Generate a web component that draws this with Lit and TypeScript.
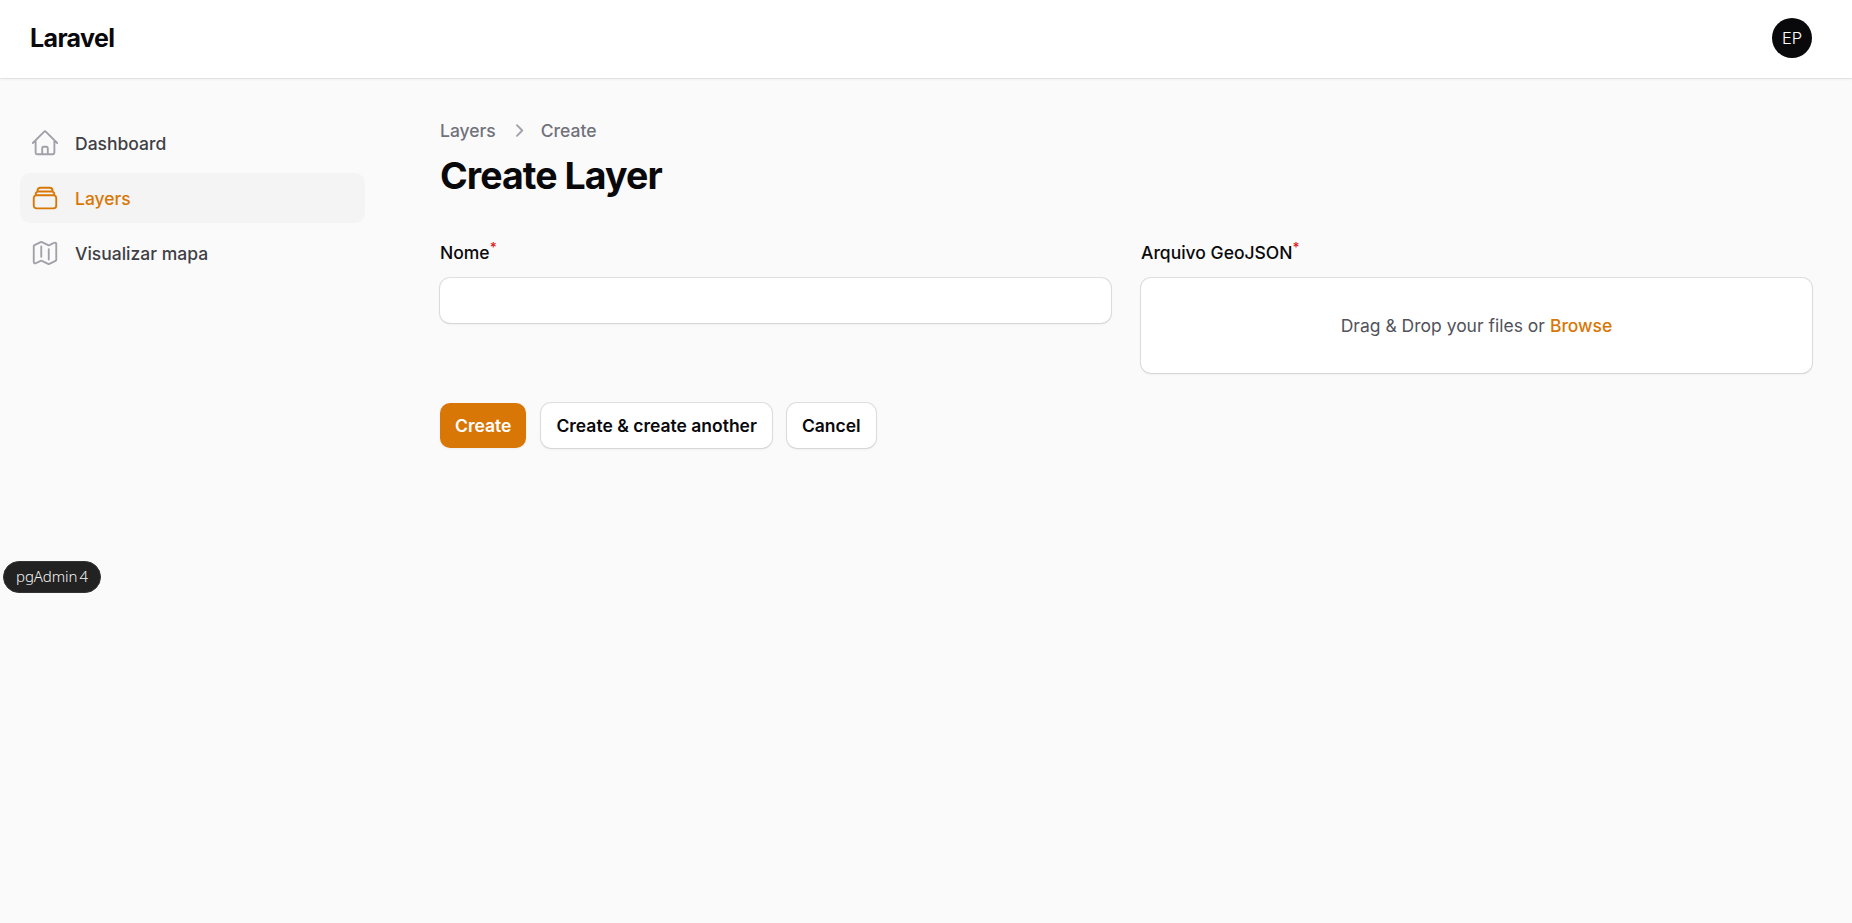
import { LitElement, html, css, svg } from "lit";
import { customElement } from "lit/decorators.js";

const icons = {
  home: "m2.25 12 8.954-8.955c.44-.439 1.152-.439 1.591 0L21.75 12M4.5 9.75v10.125c0 .621.504 1.125 1.125 1.125H9.75v-4.875c0-.621.504-1.125 1.125-1.125h2.25c.621 0 1.125.504 1.125 1.125V21h4.125c.621 0 1.125-.504 1.125-1.125V9.75M8.25 21h8.25",
  stack: "M6 6.878V6a2.25 2.25 0 0 1 2.25-2.25h7.5A2.25 2.25 0 0 1 18 6v.878m-12 0c.235-.083.487-.128.75-.128h10.5c.263 0 .515.045.75.128m-12 0A2.25 2.25 0 0 0 4.5 9v.878m13.5-3A2.25 2.25 0 0 1 19.5 9v.878m0 0a2.246 2.246 0 0 0-.75-.128H5.25c-.263 0-.515.045-.75.128m15 0A2.25 2.25 0 0 1 21 12v6a2.25 2.25 0 0 1-2.25 2.25H5.25A2.25 2.25 0 0 1 3 18v-6c0-.98.626-1.813 1.5-2.122",
  map: "M9 6.75V15m6-6v8.25m.503 3.498 4.875-2.437c.381-.19.622-.58.622-1.006V4.82c0-.836-.88-1.38-1.628-1.006l-3.869 1.934c-.317.159-.69.159-1.006 0L9.503 3.252a1.125 1.125 0 0 0-1.006 0L3.622 5.689C3.24 5.88 3 6.27 3 6.695V19.18c0 .836.88 1.38 1.628 1.006l3.869-1.934c.317-.159.69-.159 1.006 0l4.994 2.497c.317.158.69.158 1.006 0Z",
};

const nav = [
  { label: "Dashboard", icon: icons.home, active: false },
  { label: "Layers", icon: icons.stack, active: true },
  { label: "Visualizar mapa", icon: icons.map, active: false },
];

@customElement("app-root")
export class AppRoot extends LitElement {
  static styles = css`
    :host {
      display: flex;
      flex-direction: column;
      position: relative;
      height: 100vh;
      overflow: hidden;
      background: #fafafa;
      color: #09090b;
      font: 500 17.5px/25px Inter, sans-serif;
    }
    * { box-sizing: border-box; }
    .topbar {
      flex: none;
      display: flex;
      align-items: center;
      justify-content: space-between;
      height: 78px;
      padding: 0 40px 2px 30px;
      background: #fff;
      box-shadow: 0 0 0 1px rgba(9, 9, 11, 0.05), 0 1px 3px rgba(0, 0, 0, 0.07);
    }
    .brand { font-size: 25px; font-weight: 700; letter-spacing: -0.025em; }
    .avatar {
      display: grid;
      place-items: center;
      width: 40px;
      height: 40px;
      border-radius: 50%;
      background: #09090b;
      color: #fff;
      font-size: 16.5px;
      font-weight: 300;
    }
    .layout { flex: 1; display: grid; grid-template-columns: 400px 1fr; }
    .sidebar {
      display: flex;
      flex-direction: column;
      gap: 5px;
      padding: 40px 35px 40px 20px;
    }
    .item {
      display: flex;
      align-items: center;
      gap: 15px;
      height: 50px;
      padding: 10px;
      border-radius: 10px;
      color: #3f3f46;
      text-decoration: none;
    }
    .item svg { width: 30px; height: 30px; color: #a1a1aa; }
    .item.active { background: #f4f4f5; color: #d97706; }
    .item.active svg { color: #d97706; }
    .main { padding: 40px; }
    .crumbs { display: flex; align-items: center; gap: 10px; color: #71717a; }
    .crumbs svg { width: 25px; height: 25px; color: #a1a1aa; }
    h1 {
      margin: 10px 0 40px;
      font-size: 37.5px;
      line-height: 45px;
      font-weight: 700;
      letter-spacing: -0.025em;
    }
    .fields { display: grid; grid-template-columns: 1fr 1fr; gap: 30px; align-items: start; }
    .field { display: grid; gap: 10px; }
    .label { line-height: 30px; height: 30px; }
    .label sup {
      color: #e02020;
      font-size: 13.125px;
      font-weight: 600;
      line-height: 0;
      position: relative;
      vertical-align: baseline;
      top: -0.5em;
    }
    .box {
      width: 100%;
      border: 0;
      outline: 0;
      border-radius: 10px;
      background: #fff;
      box-shadow: 0 0 0 1px rgba(9, 9, 11, 0.1), 0 1px 3px rgba(0, 0, 0, 0.08);
    }
    .input { height: 45px; padding: 0 15px; font: inherit; }
    .drop {
      display: flex;
      align-items: center;
      justify-content: center;
      gap: 5px;
      height: 95px;
      color: #52525b;
      font-weight: 400;
    }
    .browse { color: #d97706; font-weight: 500; }
    .actions { display: flex; gap: 15px; margin-top: 30px; }
    .btn {
      height: 45px;
      padding: 0 15px;
      border: 0;
      border-radius: 10px;
      background: #fff;
      color: #09090b;
      font: 600 17.5px/25px Inter, sans-serif;
      box-shadow: 0 0 0 1px rgba(9, 9, 11, 0.1), 0 1px 3px rgba(0, 0, 0, 0.08);
    }
    .btn.primary {
      background: #d97706;
      color: #fff;
      box-shadow: 0 1px 3px rgba(0, 0, 0, 0.05);
    }
    .tooltip {
      position: absolute;
      left: 3px;
      top: 561px;
      width: 98px;
      height: 32px;
      border-radius: 16px;
      background: #222;
      border: 1px solid #333;
      color: #f4f4f4;
      font: 350 15px/29px "Noto Sans", sans-serif;
      text-align: center;
      white-space: nowrap;
      word-spacing: -1.5px;
      letter-spacing: -0.1px;
    }
  `;

  private icon(d: string) {
    return html`<svg viewBox="0 0 24 24" fill="none" stroke="currentColor" stroke-width="1.5" stroke-linecap="round" stroke-linejoin="round">${svg`<path d=${d}></path>`}</svg>`;
  }

  render() {
    return html`
      <header class="topbar">
        <div class="brand">Laravel</div>
        <div class="avatar">EP</div>
      </header>
      <div class="layout">
        <nav class="sidebar">
          ${nav.map((n) => html`<a class="item ${n.active ? "active" : ""}">${this.icon(n.icon)}<span>${n.label}</span></a>`)}
        </nav>
        <main class="main">
          <div class="crumbs">
            <span>Layers</span>
            <svg viewBox="0 0 20 20" fill="currentColor"><path fill-rule="evenodd" d="M8.22 5.22a.75.75 0 0 1 1.06 0l4.25 4.25a.75.75 0 0 1 0 1.06l-4.25 4.25a.75.75 0 0 1-1.06-1.06L11.94 10 8.22 6.28a.75.75 0 0 1 0-1.06Z" clip-rule="evenodd"></path></svg>
            <span>Create</span>
          </div>
          <h1>Create Layer</h1>
          <div class="fields">
            <div class="field">
              <label class="label" for="nome">Nome<sup>*</sup></label>
              <input id="nome" class="box input" type="text" />
            </div>
            <div class="field">
              <div class="label">Arquivo GeoJSON<sup>*</sup></div>
              <div class="box drop"><span>Drag &amp; Drop your files or</span><span class="browse">Browse</span></div>
            </div>
          </div>
          <div class="actions">
            <button class="btn primary">Create</button>
            <button class="btn">Create &amp; create another</button>
            <button class="btn">Cancel</button>
          </div>
        </main>
      </div>
      <div class="tooltip">pgAdmin 4</div>
    `;
  }
}
